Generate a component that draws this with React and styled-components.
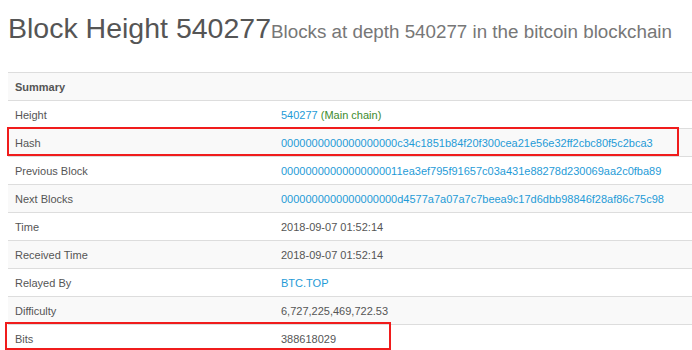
import React from 'react'
import styled, { createGlobalStyle } from 'styled-components'

const GlobalStyle = createGlobalStyle`
  body {
    margin: 0;
    background: #fff;
    font-family: "Liberation Sans", Arial, sans-serif;
    color: #555;
  }
`

const Page = styled.div`
  position: relative;
  width: 692px;
  height: 350px;
  overflow: hidden;
  padding: 0 0 0 8px;
  box-sizing: border-box;
`

const Heading = styled.div`
  display: flex;
  align-items: baseline;
  padding-top: 11px;
  height: 72px;
  box-sizing: border-box;
`

const Title = styled.h1`
  margin: 0;
  font-size: 28.5px;
  font-weight: 400;
  line-height: 34px;
  color: #555;
  white-space: nowrap;
`

const Subtitle = styled.span`
  font-size: 18.8px;
  color: #777;
  white-space: nowrap;
`

const Table = styled.table`
  width: 700px;
  border-collapse: collapse;
  font-size: 11px;
`

const Row = styled.tr`
  height: 28px;
  border-top: 1px solid #ddd;
  background: ${p => (p.$striped ? '#f9f9f9' : '#fff')};
`

const HeaderCell = styled.th`
  padding: 0 7px;
  text-align: left;
  font-weight: 700;
  color: #555;
`

const Label = styled.td`
  width: 251px;
  padding: 0 7px;
  color: #555;
`

const Value = styled.td`
  padding: 0 8px;
  color: #555;
  white-space: nowrap;
`

const Link = styled.a`
  color: #1f9bd7;
  text-decoration: none;
`

const Chain = styled.span`
  color: #3d8b2e;
`

const Highlight = styled.div`
  position: absolute;
  border: 2px solid #f01c1c;
  box-sizing: border-box;
  left: ${p => p.$x}px;
  top: ${p => p.$y}px;
  width: ${p => p.$w}px;
  height: ${p => p.$h}px;
`

const zeros = n => '0'.repeat(n)

const rows = [
  ['Height', <><Link>540277</Link> <Chain>(Main chain)</Chain></>],
  ['Hash', <Link>{zeros(19) + 'c34c1851b84f20f300cea21e56e32ff2cbc80f5c2bca3'}</Link>],
  ['Previous Block', <Link>{zeros(18) + '11ea3ef795f91657c03a431e88278d230069aa2c0fba89'}</Link>],
  ['Next Blocks', <Link>{zeros(19) + 'd4577a7a07a7c7beea9c17d6dbb98846f28af86c75c98'}</Link>],
  ['Time', '2018-09-07 01:52:14'],
  ['Received Time', '2018-09-07 01:52:14'],
  ['Relayed By', <Link>BTC.TOP</Link>],
  ['Difficulty', '6,727,225,469,722.53'],
  ['Bits', '388618029'],
]

export default function App() {
  return (
    <Page>
      <GlobalStyle />
      <Heading>
        <Title>Block Height 540277</Title>
        <Subtitle>Blocks at depth 540277 in the bitcoin blockchain</Subtitle>
      </Heading>
      <Table>
        <tbody>
          <Row $striped>
            <HeaderCell colSpan={2}>Summary</HeaderCell>
          </Row>
          {rows.map(([label, value], i) => (
            <Row key={label} $striped={i % 2 === 1}>
              <Label>{label}</Label>
              <Value>{value}</Value>
            </Row>
          ))}
        </tbody>
      </Table>
      <Highlight $x={7} $y={127} $w={672} $h={29} />
      <Highlight $x={5} $y={322} $w={386} $h={28} />
    </Page>
  )
}
